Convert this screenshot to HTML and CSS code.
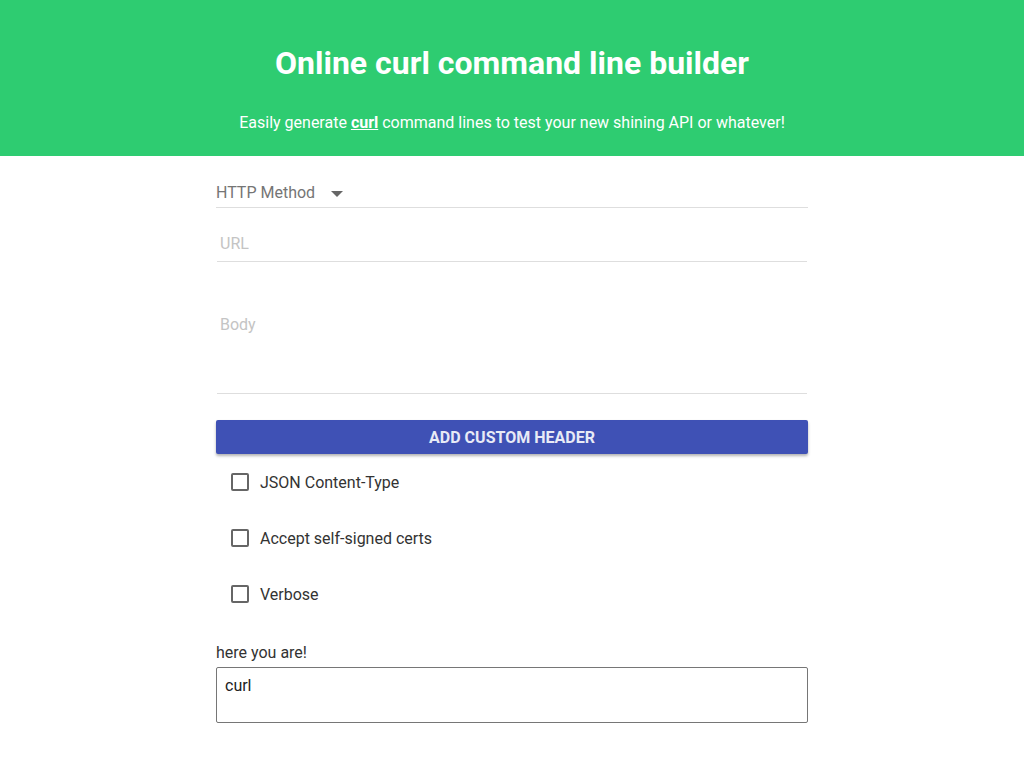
FILE: index.html
```html
<!DOCTYPE html>
<html>
<head>
<meta charset="utf-8">
<link rel="stylesheet" href="styles.css">
</head>
<body>
<header class="hero">
  <h1 class="title">Online curl command line builder</h1>
  <p class="subtitle">Easily generate <a class="curl-link">curl</a> command lines to test your new shining API or whatever!</p>
</header>
<main class="form">
  <div class="select-field">
    <span class="select-label">HTTP Method</span>
    <svg class="caret" width="12" height="6" viewBox="0 0 12 6"><path d="M0 0 L12 0 L6 6 Z" fill="#666"/></svg>
  </div>
  <div class="text-field url-field"><span class="placeholder">URL</span></div>
  <div class="text-field body-field"><span class="placeholder">Body</span></div>
  <button class="add-btn">ADD CUSTOM HEADER</button>
  <div class="checks">
    <label class="check"><span class="box"></span><span class="check-label">JSON Content-Type</span></label>
    <label class="check"><span class="box"></span><span class="check-label">Accept self-signed certs</span></label>
    <label class="check"><span class="box"></span><span class="check-label">Verbose</span></label>
  </div>
  <div class="result-label">here you are!</div>
  <div class="result">curl</div>
</main>
</body>
</html>
```

FILE: styles.css
```css
html, body {
  margin: 0;
  padding: 0;
  background: #fff;
  font-family: Roboto, "Liberation Sans", sans-serif;
}
.hero {
  background: #2ecc71;
  height: 156px;
  box-sizing: border-box;
  padding-top: 42px;
  text-align: center;
  color: #fff;
}
.title {
  margin: 0;
  font-size: 32px;
  font-weight: 700;
  line-height: 42px;
}
.subtitle {
  margin: 28px 0 0;
  font-size: 16px;
  line-height: 22px;
}
.curl-link {
  color: #fff;
  font-weight: 700;
  text-decoration: underline;
}
.form {
  width: 592px;
  margin: 0 auto;
  display: flex;
  flex-direction: column;
}
.select-field {
  margin-top: 20px;
  height: 32px;
  box-sizing: border-box;
  padding-top: 2px;
  border-bottom: 1px solid #dedede;
  display: flex;
  align-items: center;
  gap: 16px;
  font-size: 16px;
  color: #757575;
}
.caret { margin-top: 3px; }
.text-field {
  margin: 0 1px 0 1px;
  border-bottom: 1px solid #dedede;
  box-sizing: border-box;
  font-size: 16px;
  color: #c4c4c4;
  padding-left: 3px;
}
.url-field {
  height: 54px;
  padding-top: 26px;
  line-height: 19px;
}
.body-field {
  height: 132px;
  padding-top: 53px;
  line-height: 19px;
}
.add-btn {
  margin-top: 26px;
  height: 34px;
  border: none;
  border-radius: 2px;
  background: #3f51b5;
  color: #e8eaf6;
  font-family: Roboto, "Liberation Sans", sans-serif;
  font-size: 16px;
  font-weight: 700;
  box-shadow: 0 2px 3px rgba(0,0,0,0.3);
  padding: 0;
}
.checks {
  display: flex;
  flex-direction: column;
}
.check {
  height: 56px;
  display: flex;
  align-items: center;
  padding-left: 15px;
  gap: 11px;
  font-size: 16px;
  color: #333;
}
.box {
  width: 14px;
  height: 14px;
  border: 2px solid #666;
  border-radius: 2px;
}
.result-label {
  margin-top: 21px;
  font-size: 16px;
  color: #333;
  line-height: 20px;
}
.result {
  margin-top: 4px;
  height: 56px;
  box-sizing: border-box;
  border: 1px solid #767676;
  border-radius: 2px;
  padding: 8px 8px;
  font-size: 16px;
  color: #222;
  line-height: 20px;
}
```
